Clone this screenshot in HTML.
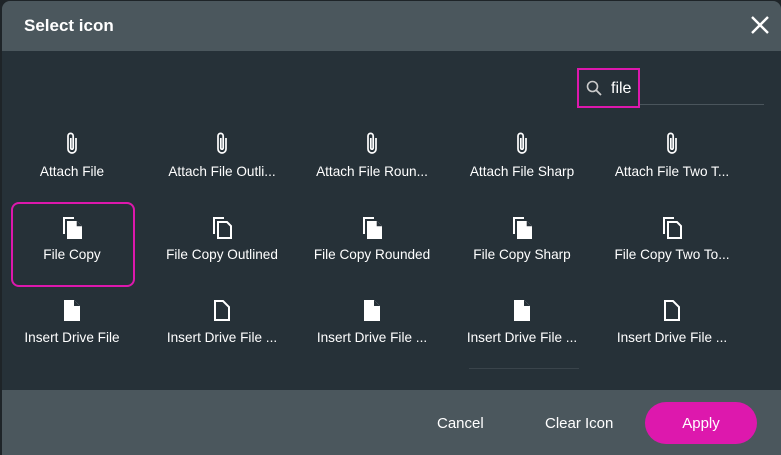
<!DOCTYPE html><html><head><style>
body{margin:0;width:781px;height:455px;background:#1e2428;font-family:"Liberation Sans",sans-serif;overflow:hidden;position:relative}
.dlg{position:absolute;left:2px;top:1px;width:779px;height:454px;border-radius:8px 8px 0 0;overflow:hidden;background:#263138}
.hd{height:50px;background:#4b575d;color:#fff;font-weight:bold;font-size:17px;line-height:50px;padding-left:22px;position:relative}
.x{position:absolute;right:12px;top:15px}
.ft{position:absolute;left:0;top:389px;width:100%;height:66px;background:#4b575d}
.btn{position:absolute;color:#fff;font-size:15px;top:25px}
.apply{position:absolute;left:643px;top:12px;width:112px;height:42px;border-radius:21px;background:#dd18ad;color:#fff;font-size:15px;text-align:center;line-height:43px}
.cell{position:absolute;width:150px;text-align:center;color:#fff;font-size:13.6px}
.cell svg{display:block;margin:0 auto 7px}
.sel{position:absolute;left:9px;top:201px;width:120px;height:81px;border:2px solid #dd18ad;border-radius:8px}
.search{position:absolute;left:575px;top:67px;width:59px;height:36px;border:2px solid #dd18ad;color:#fff;font-size:16px}
</style></head><body>
<div class="dlg">
<div class="hd">Select icon<svg class="x" width="18" height="18" viewBox="0 0 18 18"><path d="M1 1L17 17M17 1L1 17" stroke="#fff" stroke-width="2.4"/></svg></div>
<div style="position:absolute;left:636px;top:103px;width:126px;height:1px;background:#4a555c"></div>
<div class="search"><svg style="position:absolute;left:7px;top:10px" width="16" height="16" viewBox="0 0 16 16"><circle cx="6.5" cy="6.5" r="5" fill="none" stroke="#ccc" stroke-width="1.6"/><path d="M10 10L15 15" stroke="#ccc" stroke-width="1.8"/></svg><span style="position:absolute;left:32px;top:10px">file</span></div>
<div class="sel"></div>
<div id="g"></div>
<div style="position:absolute;left:467px;top:367px;width:110px;height:1px;background:#3a444b"></div>
<div class="ft">
<div class="btn" style="left:435px">Cancel</div>
<div class="btn" style="left:543px">Clear Icon</div>
<div class="apply">Apply</div>
</div>
</div>
<script>
var clip='<svg width="18" height="26" viewBox="0 0 18 26"><path d="M13 7v11a4 4 0 0 1-8 0V5a2.6 2.6 0 0 1 5.2 0v12a1.2 1.2 0 0 1-2.4 0V7" fill="none" stroke="#fff" stroke-width="1.7"/></svg>';
var copy='<svg width="24" height="26" viewBox="0 0 24 26"><path d="M3 3h11v2H5v15H3z" fill="#fff"/><path d="M7 7h10l5 5v13H7z" fill="#fff"/><path d="M17 7v5h5" fill="#263138" stroke="#263138" stroke-width=".6"/></svg>';
var copyO='<svg width="24" height="26" viewBox="0 0 24 26"><path d="M3 3h11v2H5v15H3z" fill="#fff"/><path d="M8 8h9l4 4v12H8z" fill="none" stroke="#fff" stroke-width="2"/></svg>';
var file='<svg width="20" height="26" viewBox="0 0 20 26"><path d="M2 3h10l6 6v15H2z" fill="#fff"/><path d="M12 3v6h6" fill="#263138"/></svg>';
var fileO='<svg width="20" height="26" viewBox="0 0 20 26"><path d="M3 4h8l6 6v13H3z" fill="none" stroke="#fff" stroke-width="2"/></svg>';
var rows=[[clip,clip,clip,clip,clip],[copy,copyO,copy,copy,copyO],[file,fileO,file,file,fileO]];
var labels=[["Attach File","Attach File Outli...","Attach File Roun...","Attach File Sharp","Attach File Two T..."],["File Copy","File Copy Outlined","File Copy Rounded","File Copy Sharp","File Copy Two To..."],["Insert Drive File","Insert Drive File ...","Insert Drive File ...","Insert Drive File ...","Insert Drive File ..."]];
var h='';
for(var r=0;r<3;r++)for(var c=0;c<5;c++){h+='<div class="cell" style="left:'+(-5+c*150)+'px;top:'+(130+r*83)+'px">'+rows[r][c]+labels[r][c]+'</div>';}
document.getElementById('g').innerHTML=h;
</script>
</body></html>
